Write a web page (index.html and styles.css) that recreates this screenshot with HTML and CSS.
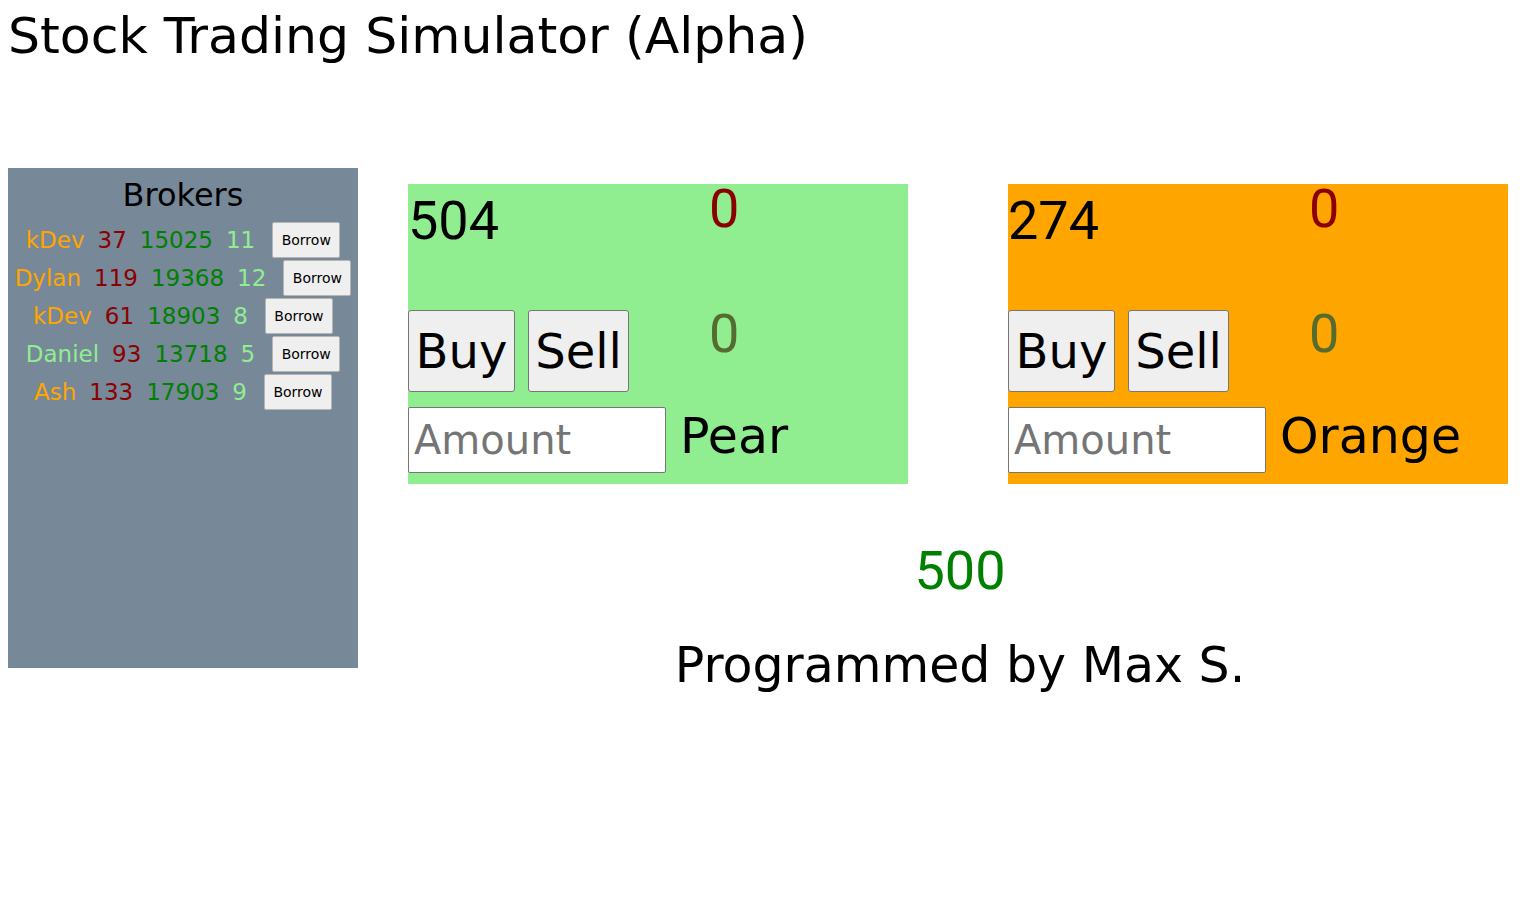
FILE: index.html
```html
<!DOCTYPE html>
<html lang="en">
<head>
<meta charset="utf-8">
<title>Stock Trading Simulator (Alpha)</title>
<link rel="stylesheet" href="styles.css">
</head>
<body>
<h1 class="title">Stock Trading Simulator (Alpha)</h1>
<div class="layout">
  <aside class="brokers">
    <h2 class="brokers-title">Brokers</h2>
    <div class="broker-row">
      <span class="b-name orange">kDev</span><span class="b-red">37</span><span class="b-green">15025</span><span class="b-light">11</span><button class="borrow">Borrow</button>
    </div>
    <div class="broker-row">
      <span class="b-name orange">Dylan</span><span class="b-red">119</span><span class="b-green">19368</span><span class="b-light">12</span><button class="borrow">Borrow</button>
    </div>
    <div class="broker-row">
      <span class="b-name orange">kDev</span><span class="b-red">61</span><span class="b-green">18903</span><span class="b-light">8</span><button class="borrow">Borrow</button>
    </div>
    <div class="broker-row">
      <span class="b-name light">Daniel</span><span class="b-red">93</span><span class="b-green">13718</span><span class="b-light">5</span><button class="borrow">Borrow</button>
    </div>
    <div class="broker-row">
      <span class="b-name orange">Ash</span><span class="b-red">133</span><span class="b-green">17903</span><span class="b-light">9</span><button class="borrow">Borrow</button>
    </div>
  </aside>
  <main class="market">
    <div class="stocks">
      <section class="stock pear">
        <div class="price">504</div>
        <div class="owned">0</div>
        <div class="actions"><button class="trade">Buy</button><button class="trade sell">Sell</button></div>
        <div class="pending">0</div>
        <div class="order"><input class="amount" type="text" placeholder="Amount"><span class="stock-name">Pear</span></div>
      </section>
      <section class="stock orange-box">
        <div class="price">274</div>
        <div class="owned">0</div>
        <div class="actions"><button class="trade">Buy</button><button class="trade sell">Sell</button></div>
        <div class="pending">0</div>
        <div class="order"><input class="amount" type="text" placeholder="Amount"><span class="stock-name">Orange</span></div>
      </section>
    </div>
    <div class="cash">500</div>
    <div class="credit">Programmed by Max S.</div>
  </main>
</div>
</body>
</html>
```
FILE: styles.css
```css
body {
  margin: 8px;
  font-family: "DejaVu Sans", sans-serif;
  color: #000;
  background: #fff;
}

.title {
  margin: 0;
  font-size: 50.5px;
  font-weight: normal;
  line-height: 56px;
}

.layout {
  display: flex;
  align-items: flex-start;
  margin-top: 104px;
}

.brokers {
  width: 350px;
  height: 500px;
  background: #778899;
  flex: none;
  padding-top: 9px;
  box-sizing: border-box;
}

.brokers-title {
  margin: 0 0 7px;
  font-size: 32px;
  font-weight: normal;
  line-height: 37px;
  text-align: center;
}

.broker-row {
  display: flex;
  justify-content: center;
  align-items: center;
  gap: 13px;
  height: 38px;
  font-size: 23px;
}

.orange { color: #ffa500; }
.light, .b-light { color: #90ee90; }
.b-red { color: #8b0000; }
.b-green { color: #008000; }

.borrow {
  font-family: "DejaVu Sans", sans-serif;
  font-size: 14px;
  height: 36px;
  width: 68px;
  padding: 0;
  margin-left: 4px;
  background: #efefef;
  border: 1px solid #b5b5b5;
  border-radius: 2px;
  color: #000;
}

.market {
  margin-left: 50px;
  width: 1104px;
  padding-top: 16px;
}

.stocks {
  display: flex;
  gap: 100px;
}

.stock {
  width: 500px;
  height: 300px;
  display: grid;
  grid-template-columns: 301px 1fr;
  grid-template-rows: 126px 82px auto;
}

.pear { background: #90ee90; }
.orange-box { background: #ffa500; }

.price, .owned, .pending, .cash {
  font-family: Roboto, "Liberation Sans", sans-serif;
  font-size: 54px;
  line-height: 1;
}

.price { padding-top: 10px; }
.owned { color: #8b0000; margin-top: -2px; }
.pending { color: #556b2f; margin-top: -3px; }

.actions {
  display: flex;
  gap: 13px;
}

.trade {
  width: 107px;
  height: 82px;
  padding: 0;
  font-family: "DejaVu Sans", sans-serif;
  font-size: 48px;
  background: #efefef;
  border: 1px solid #767676;
  border-radius: 3px;
  color: #000;
}

.trade.sell { width: 101px; }

.order {
  grid-column: 1 / 3;
  display: flex;
  align-items: center;
  gap: 14px;
  margin-top: 15px;
  height: 66px;
}

.amount {
  width: 258px;
  height: 66px;
  box-sizing: border-box;
  padding: 0 5px;
  font-family: "DejaVu Sans", sans-serif;
  font-size: 40px;
  border: 1px solid #767676;
  border-radius: 2px;
  background: #fff;
}

.amount::placeholder { color: #757575; }

.stock-name {
  font-size: 49px;
  line-height: 56px;
  margin-top: -6px;
}

.cash {
  color: #008000;
  text-align: center;
  margin-top: 60px;
}

.credit {
  text-align: center;
  font-size: 49px;
  line-height: 56px;
  margin-top: 40px;
}
```
